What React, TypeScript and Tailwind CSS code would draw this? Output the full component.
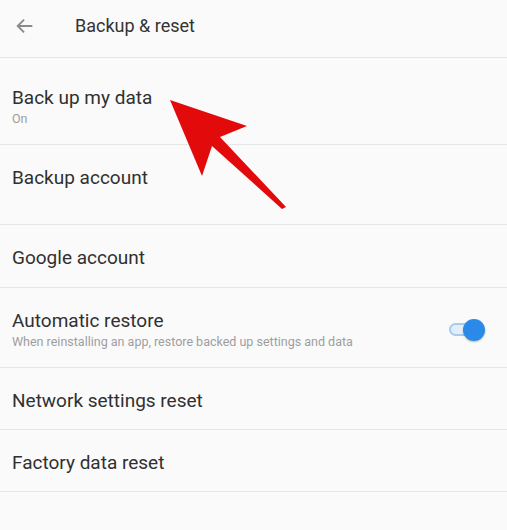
import React from "react";

function Row({ title, sub, h, right }: { title: string; sub?: string; h: string; right?: React.ReactNode }) {
  return (
    <div className={`flex items-center border-b border-[#e6e6e6] pl-3 pr-[22px] ${h}`}>
      <div className="flex flex-1 flex-col">
        <div className="text-[19px] leading-[24px] text-[#303030]">{title}</div>
        {sub && <div className="mt-[1px] text-[12.5px] leading-[16px] text-[#9e9e9e]">{sub}</div>}
      </div>
      {right}
    </div>
  );
}

export default function App() {
  return (
    <div className="relative h-[530px] w-[507px] overflow-hidden bg-[#fafafa]" style={{ fontFamily: "Roboto, 'Open Sans', sans-serif" }}>
      <div className="flex h-[58px] items-center border-b border-[#e6e6e6] pb-[6px]">
        <svg width="22" height="22" viewBox="0 0 24 24" className="ml-[14px]" fill="none" stroke="#8a8a8a" strokeWidth="2">
          <path d="M20 12H4M11 5l-7 7 7 7" />
        </svg>
        <div className="ml-[39px] text-[18px] text-[#333]">Backup &amp; reset</div>
      </div>
      <Row title="Back up my data" sub="On" h="h-[87px] pt-[10px]" />
      <Row title="Backup account" h="h-[80px] pb-[14px]" />
      <Row title="Google account" h="h-[63px] pt-[4px]" />
      <Row
        title="Automatic restore"
        sub="When reinstalling an app, restore backed up settings and data"
        h="h-[80px] pt-[4px]"
        right={
          <div className="relative h-[22px] w-[36px]">
            <div className="absolute left-0 top-[4px] h-[13px] w-[30px] rounded-full border-2 border-[#a7cbee] bg-[#e4eefa]" />
            <div className="absolute left-[14px] top-0 h-[22px] w-[22px] rounded-full bg-[#2b8ae8] shadow-[0_1px_2px_rgba(0,0,0,0.25)]" />
          </div>
        }
      />
      <Row title="Network settings reset" h="h-[62px] pt-[4px]" />
      <Row title="Factory data reset" h="h-[62px] pt-[4px]" />
      <svg className="absolute left-0 top-0" width="507" height="530" viewBox="0 0 507 530">
        <polygon points="170,100 247,126 220,137 286,207 282,209 212,146 202,176" fill="#e20a0a" />
      </svg>
    </div>
  );
}
